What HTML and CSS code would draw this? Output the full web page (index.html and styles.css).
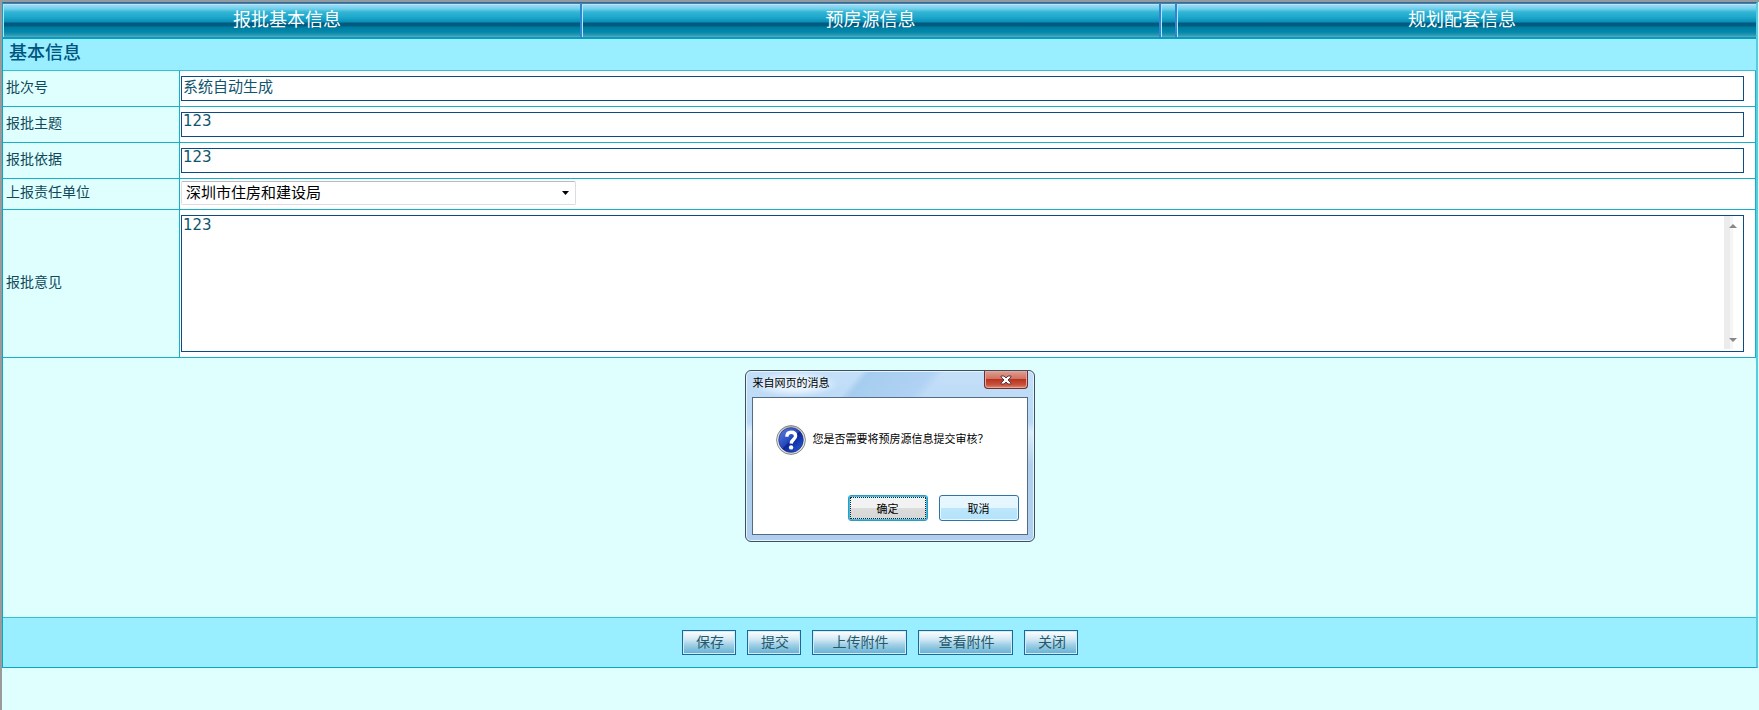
FILE: index.html
```html
<!DOCTYPE html>
<html lang="zh-CN">
<head>
<meta charset="utf-8">
<title>报批基本信息</title>
<link rel="stylesheet" href="styles.css">
</head>
<body>
<main class="frame">
  <nav class="tabs">
    <button type="button" class="tab tab-outer">报批基本信息</button>
    <button type="button" class="tab">预房源信息</button>
    <span class="tab tab-gap"></span>
    <button type="button" class="tab tab-outer">规划配套信息</button>
  </nav>
  <form class="form" id="approval">
    <h1 class="section">基本信息</h1>
    <div class="row">
      <label class="label" for="batch">批次号</label>
      <div class="value"><input class="field" id="batch" type="text" value="系统自动生成" readonly></div>
    </div>
    <div class="row">
      <label class="label" for="subject">报批主题</label>
      <div class="value"><input class="field" id="subject" type="text" value="123"></div>
    </div>
    <div class="row">
      <label class="label" for="basis">报批依据</label>
      <div class="value"><input class="field" id="basis" type="text" value="123"></div>
    </div>
    <div class="row row-select">
      <label class="label" for="unit">上报责任单位</label>
      <div class="value">
        <select class="select" id="unit"><option>深圳市住房和建设局</option></select>
      </div>
    </div>
    <div class="row">
      <label class="label" for="opinion">报批意见</label>
      <div class="value">
        <div class="area">
          <textarea class="area-text" id="opinion">123</textarea>
          <div class="scroll">
            <svg width="10" height="6" viewBox="0 0 10 6"><path d="M1 5 5 1 9 5Z" fill="#888"/></svg>
            <svg width="10" height="6" viewBox="0 0 10 6"><path d="M1 1 5 5 9 1Z" fill="#888"/></svg>
          </div>
        </div>
      </div>
    </div>
  </form>
  <footer class="actions">
    <button type="button" class="action">保存</button>
    <button type="button" class="action">提交</button>
    <button type="button" class="action action-wide">上传附件</button>
    <button type="button" class="action action-wide">查看附件</button>
    <button type="button" class="action">关闭</button>
  </footer>
</main>
<section class="dialog" role="dialog" aria-labelledby="dialog-title">
  <header class="dialog-bar">
    <h2 class="dialog-title" id="dialog-title">来自网页的消息</h2>
    <button type="button" class="close" aria-label="关闭">
      <svg width="12" height="10" viewBox="0 0 12 10"><path d="M1 1H4L6 3 8 1H11V2L8 5 11 8V9H8L6 7 4 9H1V8L4 5 1 2Z" fill="#fff" stroke="#5b3a45" stroke-width="1" stroke-linejoin="round"/></svg>
    </button>
  </header>
  <div class="dialog-body">
    <div class="message">
      <svg class="help" width="30" height="30" viewBox="0 0 30 30">
        <defs>
          <linearGradient id="ring" x1="0" y1="0" x2="0" y2="1"><stop offset="0" stop-color="#b4b4b4"/><stop offset=".5" stop-color="#f2f2f2"/><stop offset="1" stop-color="#d5d5d5"/></linearGradient>
          <linearGradient id="ball" x1="0" y1="0" x2="1" y2="1"><stop offset="0" stop-color="#5f83df"/><stop offset=".48" stop-color="#2547bd"/><stop offset=".52" stop-color="#0c2599"/><stop offset="1" stop-color="#2c62e0"/></linearGradient>
        </defs>
        <circle cx="15" cy="15" r="14.4" fill="url(#ring)" stroke="#888" stroke-width="1"/>
        <circle cx="15" cy="15" r="12.3" fill="url(#ball)" stroke="#1a2f80" stroke-width=".7"/>
        <path d="M10.9 11.7C10.9 8.6 12.6 7.3 15.2 7.3C17.9 7.3 19.6 8.8 19.6 11.1C19.6 14.4 15.3 14.4 15.2 18.6" fill="none" stroke="#fff" stroke-width="3.4"/>
        <circle cx="15.1" cy="22.4" r="2.2" fill="#fff"/>
      </svg>
      <p class="message-text">您是否需要将预房源信息提交审核？</p>
    </div>
    <div class="choices">
      <button type="button" class="choice choice-ok">确定</button>
      <button type="button" class="choice">取消</button>
    </div>
  </div>
</section>
</body>
</html>
```

FILE: styles.css
```css
* { box-sizing: border-box; }

body {
  position: relative;
  display: flex;
  flex-direction: column;
  min-height: 100vh;
  margin: 0;
  padding: 0 1px 42px 0;
  border-top: 2px solid #909b9f;
  border-left: 2px solid #9a9a9a;
  background: #dfffff;
  color: #10495a;
  font-family: "Liberation Sans", "Noto Sans CJK SC", sans-serif;
}

button, input, select, textarea { font-family: inherit; border-radius: 0; }

.frame {
  flex: 1;
  display: flex;
  flex-direction: column;
  border: 1px solid #0ba6c4;
  border-top-color: #55636c;
  border-right: 2px solid #5accdf;
}

.tabs {
  display: grid;
  grid-template-columns: 1fr 1fr 16px 1fr;
}

.tab {
  height: 36px;
  padding: 0 0 2px;
  border: 0 solid #2f86cc;
  border-width: 1px 2px 0 0;
  border-bottom: 2px solid #039fc0;
  box-shadow: inset 1px 1px 0 #b4e4ff;
  background: linear-gradient(#a8ddf8 0, #6ccfe9 5px, #34b5d5 8px, #1ea8cc 13px, #0a8fb7 18px, #00587d 19px, #005e82 22px, #007a9e 23px, #0089ad 28px, #2a96b0 31px, #62a8b8 33px);
  color: #fff;
  font-size: 18px;
  line-height: 24px;
}

.tab:last-child { border-right-width: 0; }
.tab-outer { padding-right: 9px; }

.form { flex: 1; }

.section {
  height: 32px;
  margin: 0;
  padding: 2px 6px 4px;
  border-bottom: 1px solid #35bfd6;
  background: #99eeff;
  color: #005580;
  font-size: 18px;
  font-weight: 500;
  line-height: 24px;
}

.row {
  display: grid;
  grid-template-columns: 177px 1fr;
  border: 0 solid #14afc9;
  border-width: 0 1px 1px 0;
  background: #fff;
}

.label {
  display: flex;
  align-items: center;
  padding: 0 3px 4px;
  border-right: 1px solid #14afc9;
  background: #dfffff;
  font-size: 14px;
  line-height: 20px;
}

.value { padding: 5px 11px 5px 1px; }

.field {
  display: block;
  width: 100%;
  height: 25px;
  padding: 0 1px 7px;
  border: 1px solid #0d4c82;
  background: #fff;
  color: #10556e;
  font-family: "DejaVu Sans", "Noto Sans CJK SC", sans-serif;
  font-size: 15px;
}

.row-select .value { padding: 2px 1px 4px; }

.select {
  display: block;
  width: 395px;
  max-width: 100%;
  height: 24px;
  padding: 0 4px 1px;
  appearance: none;
  border: 1px solid #dcdce4;
  border-top-color: #bbb9c4;
  border-radius: 2px;
  background: #fff url("data:image/svg+xml,%3Csvg xmlns='http://www.w3.org/2000/svg' width='7' height='4'%3E%3Cpath d='M0 0H7L3.5 4Z'/%3E%3C/svg%3E") no-repeat right 6px center;
  color: #000;
  font-size: 15px;
}

.area {
  display: flex;
  height: 137px;
  border: 1px solid #0d4c82;
}

.area-text {
  flex: 1;
  padding: 1px;
  border: 0;
  background: #fff;
  color: #10556e;
  font-family: "DejaVu Sans", "Noto Sans CJK SC", sans-serif;
  font-size: 15px;
  line-height: 17px;
  resize: none;
}

.scroll {
  display: flex;
  flex-direction: column;
  justify-content: space-between;
  align-items: center;
  width: 17px;
  margin: 0 2px 2px 0;
  padding: 7px 0 6px;
  background: linear-gradient(90deg, #ececec 6px, #f5f5f5 6px, #f5f5f5 9px, #fff 9px);
}

.actions {
  display: flex;
  justify-content: center;
  gap: 11px;
  height: 50px;
  padding-top: 12px;
  border-top: 1px solid #35bfd6;
  background: #99eeff;
}

.action {
  width: 54px;
  height: 25px;
  padding: 0 0 2px 3px;
  border: 1px solid #19699b;
  box-shadow: inset 0 0 0 1px #d2ecf8;
  background: linear-gradient(#fff, #d5eaf5 35%, #a0d0e6 60%, #64b0d4);
  color: #245a6c;
  font-size: 14px;
  line-height: 20px;
}

.action-wide { width: 95px; }

.dialog {
  position: absolute;
  top: 368px;
  left: 50%;
  width: 290px;
  margin-left: -136px;
  padding: 0 6px 6px;
  border: 1px solid #3f4f5f;
  border-radius: 6px;
  box-shadow: inset 0 0 0 1px #e4f5ff;
  background:
    linear-gradient(130deg, transparent 37%, #a6cdef 40%, #b0d2f4 60%, transparent 64%) top / 100% 28px no-repeat,
    linear-gradient(#c4dff8, #b8d8f6 30%, #dceefb 36%, #b0cfee 55%, #b0cfee);
  color: #000;
}

.dialog-bar {
  display: flex;
  justify-content: space-between;
  height: 26px;
}

.dialog-title {
  margin: 0;
  padding: 4px 9px 0 1px;
  border-radius: 8px;
  background: radial-gradient(closest-side, #e6f2fd 50%, transparent);
  font-size: 11px;
  font-weight: 400;
  line-height: 16px;
}

.close {
  display: flex;
  align-items: center;
  justify-content: center;
  width: 44px;
  height: 18px;
  padding: 0;
  border: 1px solid #6b2e35;
  border-top: 0;
  border-radius: 0 0 4px 4px;
  box-shadow: inset 0 0 0 1px #e7a79c;
  background: linear-gradient(#dfa092, #d0725f 45%, #b83420 50%, #c8503a 80%, #e08a68);
}

.dialog-body {
  height: 138px;
  padding: 27px 8px 0 23px;
  border: 1px solid #566b80;
  background: #fff;
}

.message {
  display: flex;
  gap: 7px;
}

.message-text {
  margin: 0;
  padding-top: 6px;
  font-size: 11px;
  line-height: 16px;
  white-space: nowrap;
}

.choices {
  display: flex;
  justify-content: flex-end;
  gap: 11px;
  padding-top: 40px;
}

.choice {
  width: 80px;
  height: 26px;
  padding: 0 0 1px;
  border: 1px solid #2f73a8;
  border-radius: 3px;
  box-shadow: inset 0 0 0 1px #e8f8ff;
  background: linear-gradient(#e6f6fe 48%, #bce6fb 50%, #b4e3fa);
  font-size: 11px;
}

.choice-ok {
  border-color: #2b9cc4;
  box-shadow: inset 0 0 0 1px #45bce6;
  outline: 1px dotted #222;
  outline-offset: -3px;
  background: linear-gradient(#f2f2f2 48%, #dcdcdc 50%, #d6d6d6);
}
```
